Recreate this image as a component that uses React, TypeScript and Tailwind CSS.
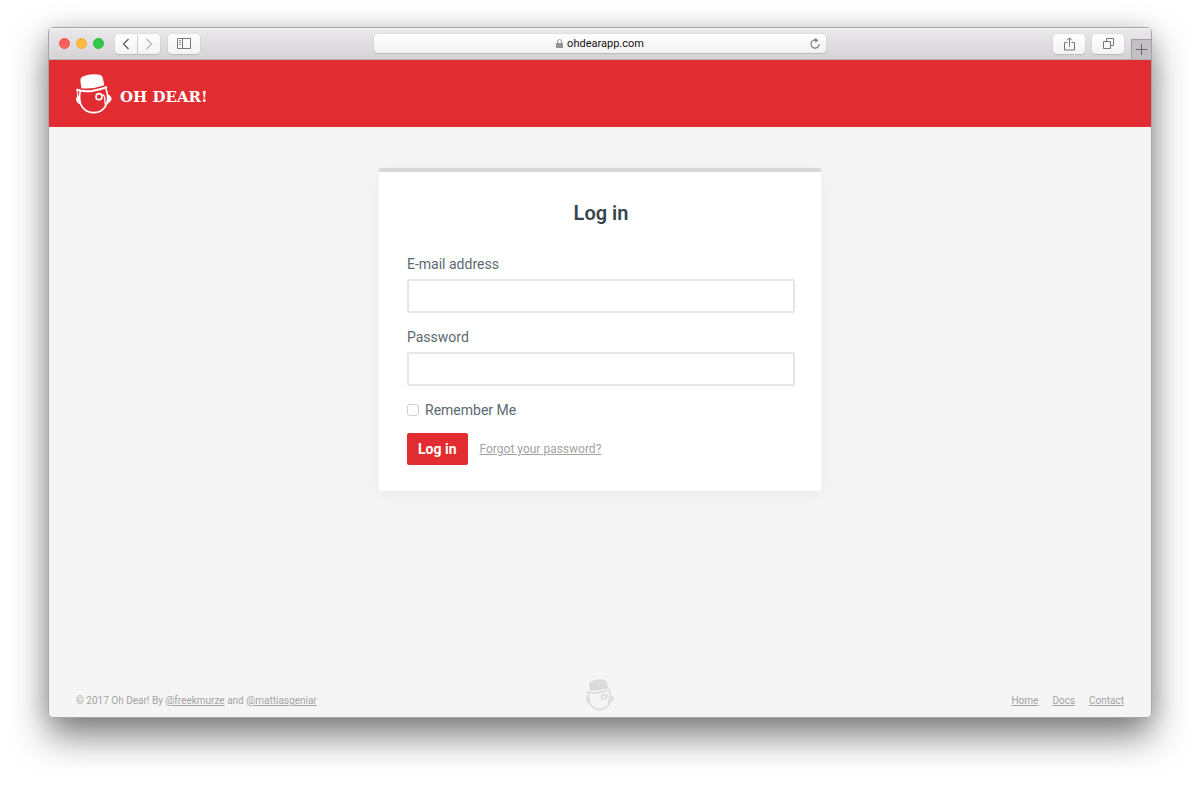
import type { ReactNode } from 'react';

function Mascot({ className }: { className: string }) {
  return (
    <svg viewBox="32 26 108 120" className={className} fill="none" stroke="currentColor" aria-hidden="true">
      <path
        d="M48 69 L45 45 Q45 34 58 31 Q84 24 103 28 Q112 30 113 41 L117 60 Q84 72 48 69Z"
        fill="currentColor"
        stroke="none"
      />
      <path d="M34 73 Q58 80 80 77 Q106 73 125 65" strokeWidth="6" />
      <path d="M45 76 Q42 88 43 100 A42 42 0 0 0 127 100 Q127 82 121 68" strokeWidth="5" />
      <path d="M35 70 L37 96" strokeWidth="3" />
      <path d="M42 90 Q32 93 32 103 Q34 114 46 117Z M126 87 Q138 91 139 101 Q136 112 124 116Z" fill="currentColor" stroke="none" />
      <circle cx="101" cy="94" r="9" strokeWidth="5" />
      <path d="M110 92 Q116 84 118 98 L120 120" strokeWidth="4" />
    </svg>
  );
}

function ToolButton({ label, className, children }: { label: string; className: string; children: ReactNode }) {
  return (
    <button
      type="button"
      aria-label={label}
      className={`flex h-5 items-center justify-center bg-linear-to-b from-white to-[#f4f3f4] shadow-[0_0_1px_rgba(0,0,0,0.25),0_1px_1px_rgba(0,0,0,0.12)] ${className}`}
    >
      {children}
    </button>
  );
}

function BrowserBar() {
  return (
    <div className="flex h-8 shrink-0 items-stretch border-b border-[#b5b3b5] bg-linear-to-b from-[#ebe9eb] to-[#d5d3d5] shadow-[inset_0_1px_0_#f7f6f7]">
      <div className="flex flex-1 items-center">
        <div className="ml-[10px] flex gap-[6px]">
          <span className="size-[11px] rounded-full border border-[#ed5550] bg-[#fc615d]" />
          <span className="size-[11px] rounded-full border border-[#e9ae3d] bg-[#fdbc40]" />
          <span className="size-[11px] rounded-full border border-[#2bb942] bg-[#34c84a]" />
        </div>
        <div className="ml-[11px] flex gap-px">
          <ToolButton label="Back" className="w-[22px] rounded-l">
            <svg width="8" height="12" viewBox="0 0 8 12" fill="none" stroke="#5f5f5f" strokeWidth="1.3">
              <path d="M6.5 1 L1.5 6 L6.5 11" />
            </svg>
          </ToolButton>
          <ToolButton label="Forward" className="w-[22px] rounded-r">
            <svg width="8" height="12" viewBox="0 0 8 12" fill="none" stroke="#b8b8b8" strokeWidth="1.3">
              <path d="M1.5 1 L6.5 6 L1.5 11" />
            </svg>
          </ToolButton>
        </div>
        <ToolButton label="Sidebar" className="ml-2 w-8 rounded">
          <svg width="14" height="11" viewBox="0 0 14 11" fill="none" stroke="#777" strokeWidth="1">
            <path d="M0.5 0.5 H13.5 V10.5 H0.5Z M5.5 0.5 V10.5" />
            <path d="M2 2.5 H4 M2 4.5 H4 M2 6.5 H4" strokeWidth="0.8" />
          </svg>
        </ToolButton>
      </div>
      <div className="my-[6px] flex w-[41%] items-center rounded bg-linear-to-b from-white to-[#f2f1f2] px-[6px] shadow-[0_0_1px_rgba(0,0,0,0.25),0_1px_1px_rgba(0,0,0,0.12)]">
        <span className="w-[10px]" />
        <div className="flex flex-1 items-center justify-center gap-1">
          <svg width="7" height="9" viewBox="0 0 7 9" aria-hidden="true">
            <rect y="4" width="7" height="5" rx="0.5" fill="#929292" />
            <path d="M1.5 4 V2.5 Q1.5 0.6 3.5 0.6 Q5.5 0.6 5.5 2.5 V4" fill="none" stroke="#929292" />
          </svg>
          <span className="text-[11px] leading-4 text-[#111]">ohdearapp.com</span>
        </div>
        <button type="button" aria-label="Reload">
          <svg width="10" height="11" viewBox="0 0 10 11" fill="none" stroke="#777" strokeWidth="1.1">
            <path d="M6 2 A4.1 4.1 0 1 0 9.2 6" />
            <path d="M5 0 L8.4 2.2 L5.4 4.8Z" fill="#777" stroke="none" />
          </svg>
        </button>
      </div>
      <div className="flex flex-1 items-center justify-end">
        <ToolButton label="Share" className="w-8 rounded">
          <svg width="11" height="14" viewBox="0 0 11 14" fill="none" stroke="#777">
            <path d="M3.5 5.5 H0.5 V13 H10.5 V5.5 H7.5 M5.5 9.5 V1 M3 3.3 L5.5 0.8 L8 3.3" />
          </svg>
        </ToolButton>
        <ToolButton label="Show tabs" className="ml-[7px] w-8 rounded">
          <svg width="11" height="11" viewBox="0 0 11 11" fill="none" stroke="#777">
            <path d="M0.5 3.5 H7.5 V10.5 H0.5Z M3.5 3.5 V0.5 H10.5 V7.5 H7.5" />
          </svg>
        </ToolButton>
        <button
          type="button"
          aria-label="New tab"
          className="ml-[7px] flex h-5 w-5 items-center justify-center self-end border-t border-l border-[#a09ea0] bg-[#c2c0c2]"
        >
          <svg width="11" height="11" viewBox="0 0 11 11" stroke="#666">
            <path d="M5.5 0 V11 M0 5.5 H11" />
          </svg>
        </button>
      </div>
    </div>
  );
}

function Field({ id, label, type }: { id: string; label: string; type: string }) {
  return (
    <div className="mb-[14px] flex flex-col">
      <label htmlFor={id} className="mb-[5px] text-sm leading-5">
        {label}
      </label>
      <input
        id={id}
        type={type}
        className="h-[34px] rounded-xs border-2 border-[#e6e6e6] bg-white px-2 text-sm outline-none focus:border-[#bbb]"
      />
    </div>
  );
}

export default function App() {
  return (
    <div className="flex min-h-screen flex-col bg-white px-12 pt-[27px] pb-[68px] font-['Roboto',sans-serif]">
      <div className="flex flex-1 flex-col rounded-[5px] shadow-[0_18px_36px_rgba(0,0,0,0.5),0_0_20px_rgba(0,0,0,0.1)]">
        <div className="flex flex-1 flex-col overflow-hidden rounded-[5px] border border-[#a5a5a5] bg-[#f5f5f5]">
          <BrowserBar />
          <header className="flex h-[67px] shrink-0 items-center bg-[#e12d32] px-[27px]">
            <a href="#home" className="flex items-center gap-2 text-white">
              <Mascot className="h-10 w-9" />
              <span className="mt-[7px] font-['DejaVu_Serif',serif] text-[15px] leading-5 font-bold">OH DEAR!</span>
            </a>
          </header>
          <main className="flex flex-1 flex-col items-center px-7 pt-[41px] pb-10">
            <form
              className="w-full max-w-[442px] rounded-xs border-t-4 border-[#d8d8d8] bg-white pt-[25px] pr-[26px] pb-[26px] pl-7 text-[#5b6970] shadow-[0_4px_18px_rgba(0,0,0,0.05)]"
              onSubmit={(event) => event.preventDefault()}
            >
              <h1 className="mb-[25px] text-center text-xl leading-8 font-semibold text-[#36454c]">Log in</h1>
              <Field id="email" label="E-mail address" type="email" />
              <Field id="password" label="Password" type="password" />
              <div className="mb-[13px] flex items-center gap-[6px]">
                <input
                  id="remember"
                  type="checkbox"
                  className="size-3 appearance-none rounded-[3px] border border-[#cfcfcf] bg-white checked:bg-[#e12d32]"
                />
                <label htmlFor="remember" className="text-sm leading-5">
                  Remember Me
                </label>
              </div>
              <div className="flex items-center gap-3">
                <button type="submit" className="h-8 rounded-xs bg-[#e12d32] px-[11px] text-sm font-bold text-white">
                  Log in
                </button>
                <a href="#forgot" className="text-xs leading-4 text-[#a3a3a3] underline">
                  Forgot your password?
                </a>
              </div>
            </form>
          </main>
          <footer className="flex items-end px-[27px] pb-[6px] text-[10px] leading-4 text-[#a3a3a3]">
            <p className="mb-[2px] flex-1">
              © 2017 Oh Dear! By{' '}
              <a href="#freekmurze" className="underline">
                @freekmurze
              </a>{' '}
              and{' '}
              <a href="#mattiasgeniar" className="underline">
                @mattiasgeniar
              </a>
            </p>
            <Mascot className="h-8 w-7 text-[#dadada]" />
            <nav className="mb-[2px] flex flex-1 justify-end gap-[14px]">
              <a href="#home" className="underline">
                Home
              </a>
              <a href="#docs" className="underline">
                Docs
              </a>
              <a href="#contact" className="underline">
                Contact
              </a>
            </nav>
          </footer>
        </div>
      </div>
    </div>
  );
}
